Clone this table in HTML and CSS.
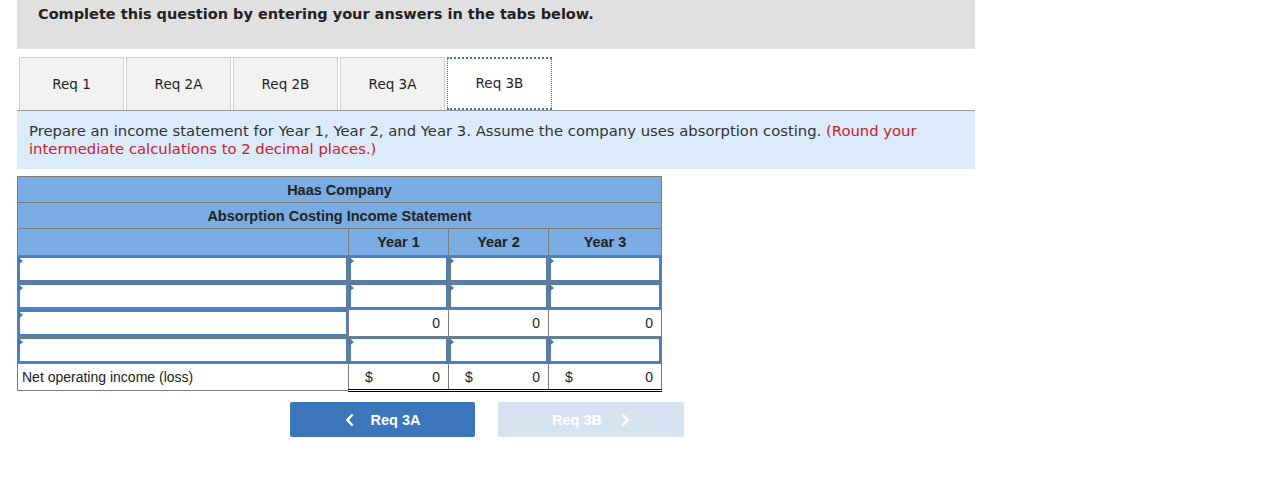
FILE: index.html
```html
<!DOCTYPE html>
<html>
<head>
<meta charset="utf-8">
<link rel="stylesheet" href="styles.css">
</head>
<body>
<div class="wrap">
  <div class="banner">Complete this question by entering your answers in the tabs below.</div>
  <div class="tabs">
    <div class="tab">Req 1</div>
    <div class="tab">Req 2A</div>
    <div class="tab">Req 2B</div>
    <div class="tab">Req 3A</div>
    <div class="tab active">Req 3B</div>
  </div>
  <div class="prompt">Prepare an income statement for Year 1, Year 2, and Year 3. Assume the company uses absorption costing. <span class="red">(Round your intermediate calculations to 2 decimal places.)</span></div>
  <table class="stmt">
    <colgroup><col class="c0"><col class="cy"><col class="cy"><col class="cy3"></colgroup>
    <tr class="hd"><td colspan="4">Haas Company</td></tr>
    <tr class="hd"><td colspan="4">Absorption Costing Income Statement</td></tr>
    <tr class="hd tall"><td></td><td>Year 1</td><td>Year 2</td><td>Year 3</td></tr>
    <tr class="row"><td class="in"><div class="box"></div></td><td class="in"><div class="box"></div></td><td class="in"><div class="box"></div></td><td class="in"><div class="box"></div></td></tr>
    <tr class="row"><td class="in"><div class="box"></div></td><td class="in"><div class="box"></div></td><td class="in"><div class="box"></div></td><td class="in"><div class="box"></div></td></tr>
    <tr class="row"><td class="in"><div class="box"></div></td><td class="num tot">0</td><td class="num tot">0</td><td class="num tot">0</td></tr>
    <tr class="row"><td class="in"><div class="box"></div></td><td class="in"><div class="box"></div></td><td class="in"><div class="box"></div></td><td class="in"><div class="box"></div></td></tr>
    <tr class="row net"><td class="lbl">Net operating income (loss)</td><td class="num dbl"><span class="cur">$</span><span>0</span></td><td class="num dbl"><span class="cur">$</span><span>0</span></td><td class="num dbl"><span class="cur">$</span><span>0</span></td></tr>
  </table>
  <div class="nav">
    <div class="btn prev"><svg class="chev l" width="10" height="14" viewBox="0 0 10 14"><path d="M7.5 1.5 L2.5 7 L7.5 12.5" fill="none" stroke="#fff" stroke-width="2.6"/></svg>Req 3A</div>
    <div class="btn next">Req 3B<svg class="chev r" width="10" height="14" viewBox="0 0 10 14"><path d="M2.5 1.5 L7.5 7 L2.5 12.5" fill="none" stroke="#fff" stroke-width="2.6"/></svg></div>
  </div>
</div>
</body>
</html>
```
FILE: styles.css
```css
html, body { margin: 0; padding: 0; background: #fff; }
.wrap { margin-left: 17px; width: 958px; }
.banner {
  background: #e0e0e0;
  height: 49px;
  box-sizing: border-box;
  padding: 6px 0 0 21px;
  font-family: "DejaVu Sans", Verdana, sans-serif;
  font-weight: bold;
  font-size: 14.5px;
  color: #222;
}
.tabs {
  display: flex;
  gap: 2px;
  padding: 8px 0 0 2px;
  border-bottom: 1px solid #999;
  height: 53px;
}
.tab {
  width: 105px;
  height: 53px;
  box-sizing: border-box;
  background: #f2f2f2;
  border: 1px solid #d0d0d0;
  border-bottom: none;
  display: flex;
  align-items: center;
  justify-content: center;
  font-family: "DejaVu Sans", Tahoma, sans-serif;
  font-size: 13.5px;
  color: #222;
  padding-bottom: 1px;
}
.tab.active {
  background: #fff;
  border: 1px dotted #3b72c0;
  border-width: 2px 1px;
}
.prompt {
  background: #dbebf9;
  height: 58px;
  box-sizing: border-box;
  padding: 11px 40px 0 12px;
  font-family: "DejaVu Sans", Verdana, sans-serif;
  font-size: 14.8px;
  line-height: 18px;
  color: #333;
}
.red { color: #c8202a; }
.stmt {
  margin-top: 7px;
  border-collapse: collapse;
  font-family: "Liberation Sans", Arial, sans-serif;
  font-size: 14px;
  color: #222;
  width: 645px;
  table-layout: fixed;
}
.c0 { width: 331px; }
.cy { width: 100px; }
.cy3 { width: 113px; }
.stmt td {
  border: 1px solid #7a7a7a;
  padding: 0;
  height: 26px;
  box-sizing: content-box;
}
.hd td {
  background: #78ace3;
  text-align: center;
  font-weight: bold;
  font-size: 14.5px;
  height: 25px;
}
.hd.tall td { height: 26px; }
.net td { height: 25px; }
.in { background: #fff; }
.box {
  height: 26px;
  box-sizing: border-box;
  border: 2px solid #4a7ec2;
  background: #fff;
  position: relative;
}
.box::before {
  content: "";
  position: absolute;
  left: -2px;
  top: -1px;
  border-top: 4px solid transparent;
  border-bottom: 4px solid transparent;
  border-left: 5px solid #3a78c4;
}
.num {
  text-align: right;
  padding-right: 8px !important;
  font-size: 14px;
}
.tot { border-top: 1px solid #000 !important; }
.dbl { border-bottom: 3px double #000 !important; }
.dbl .cur { float: left; padding-left: 16px; }
.lbl { font-size: 14px; padding-left: 4px !important; }
.nav {
  display: flex;
  gap: 23px;
  margin: 10px 0 0 273px;
}
.btn {
  width: 186px;
  height: 35px;
  border-radius: 2px;
  display: flex;
  align-items: center;
  justify-content: center;
  font-family: "Liberation Sans", Arial, sans-serif;
  font-weight: bold;
  font-size: 14.5px;
  color: #fff;
}
.prev { background: #3a76b9; width: 185px; }
.next { background: #d7e3f1; }
.chev.l { margin-right: 16px; }
.chev.r { margin-left: 18px; }
```
